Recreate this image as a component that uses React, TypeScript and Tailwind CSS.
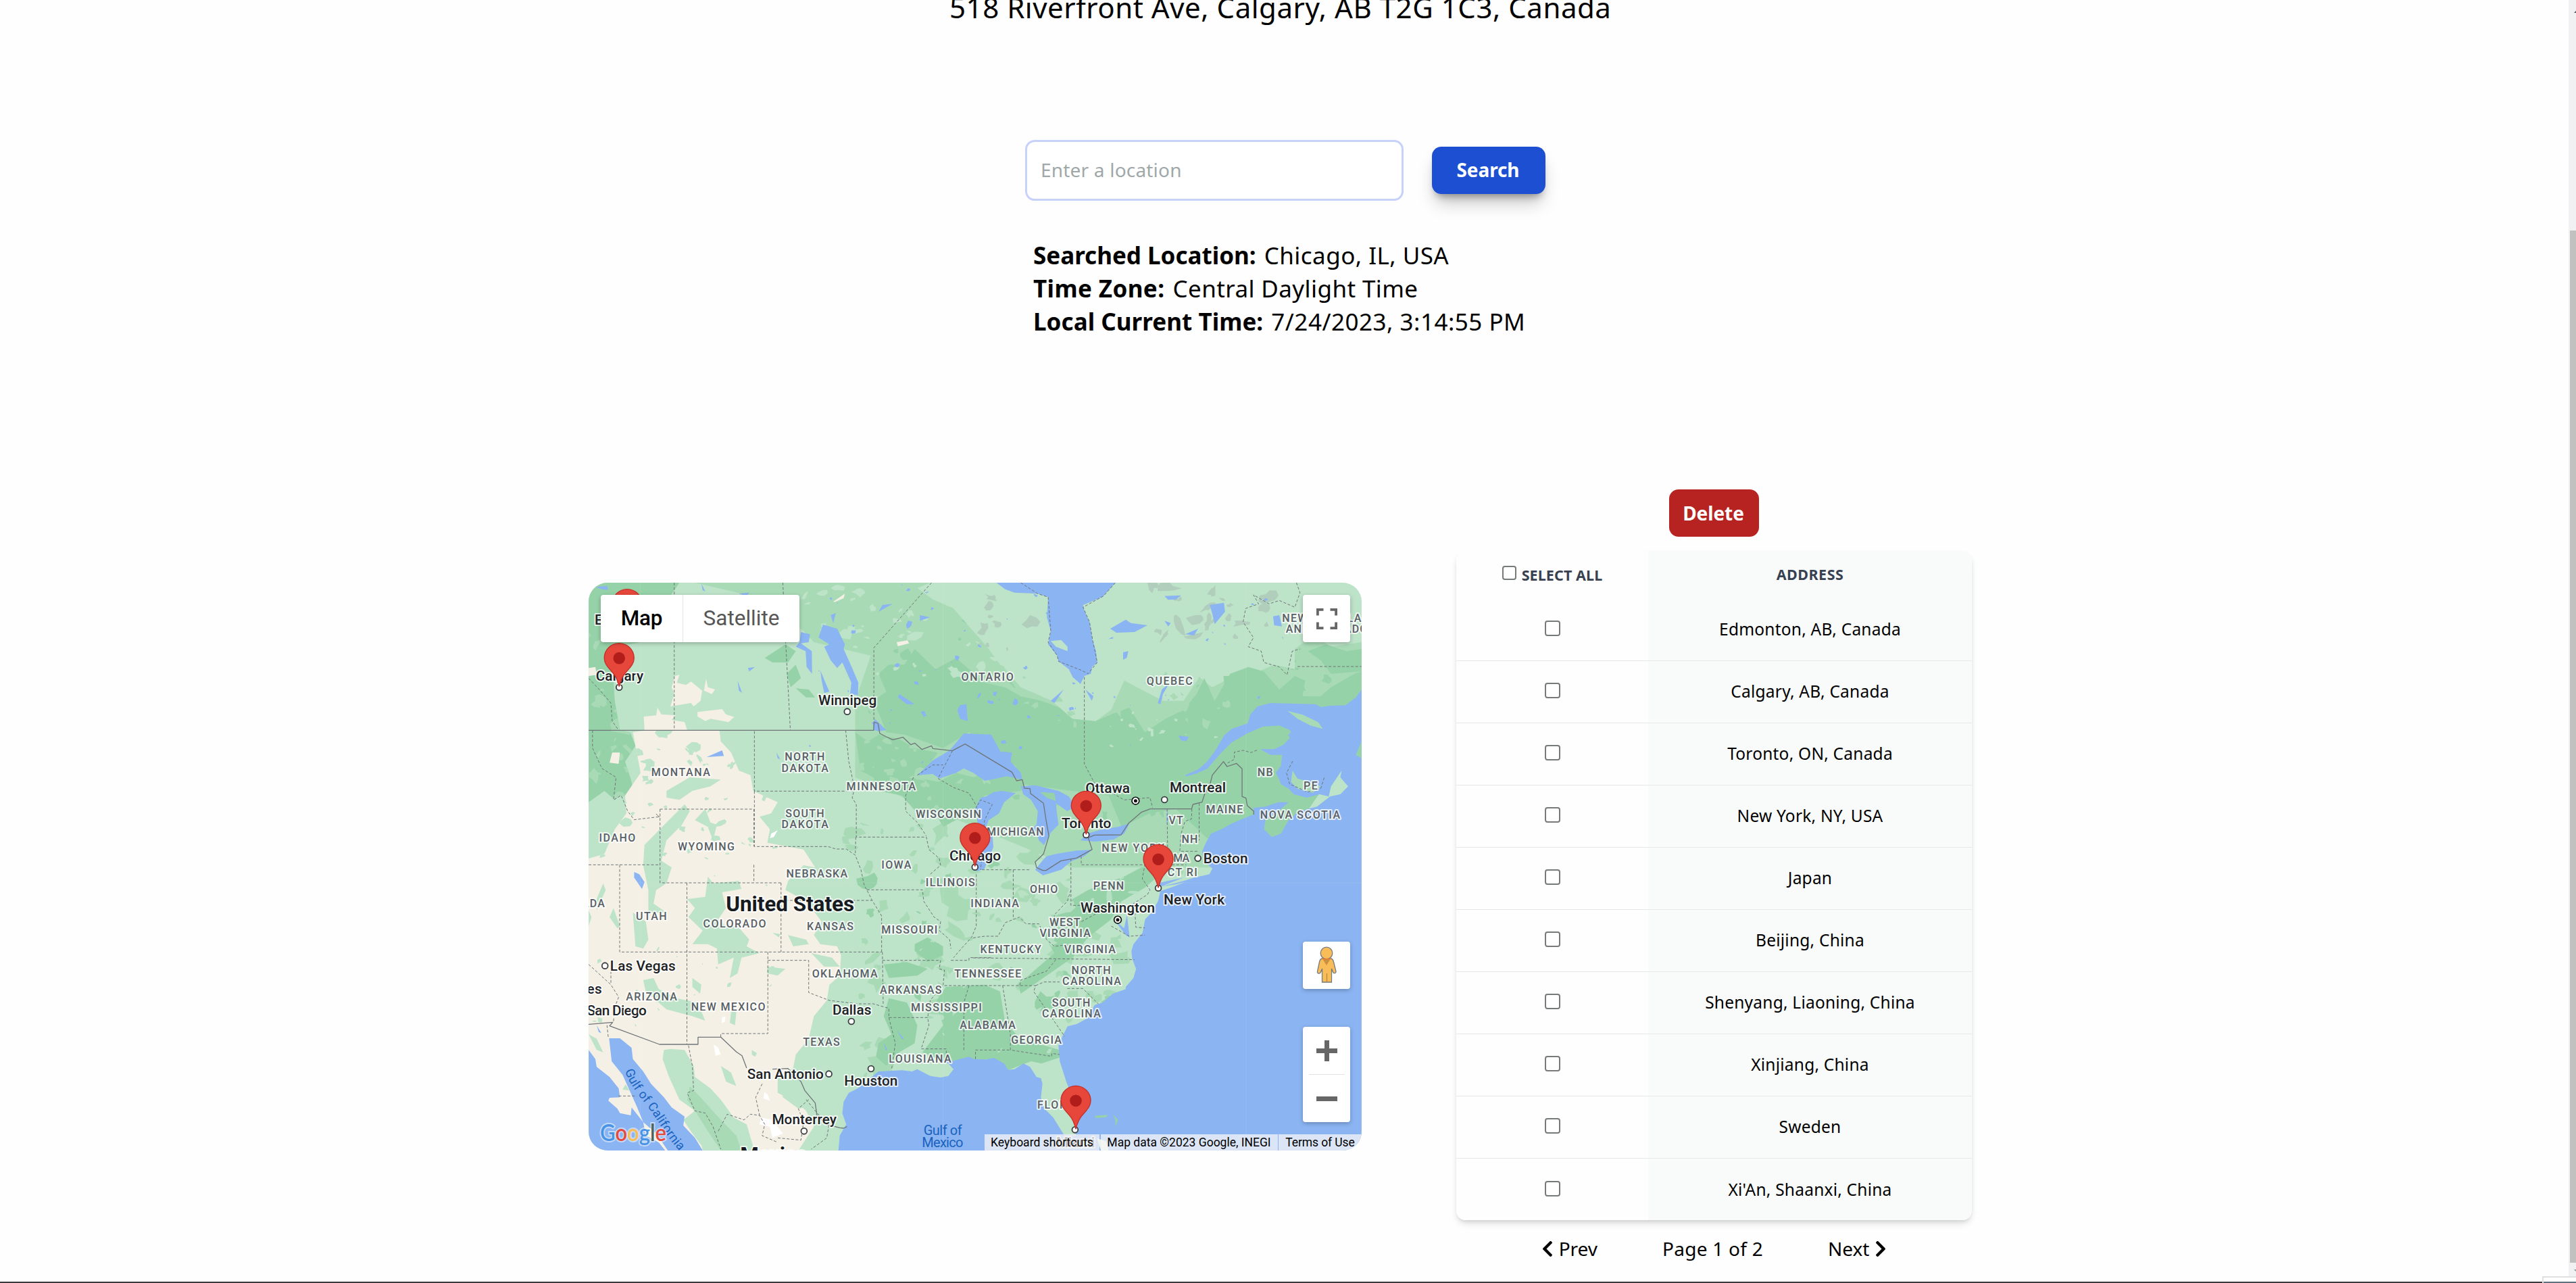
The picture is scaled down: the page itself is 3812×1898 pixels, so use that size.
import { FaChevronLeft, FaChevronRight } from "react-icons/fa";

/* ---------- map geometry ---------- */

const KX = 0.38265;
const KY = 1 / 3;
const px = (x: number) => x * KX - 11;
const py = (y: number) => y * KY - 12;

const LAND = "#bde3c9";
const MID = "#a9dab6";
const FOREST = "#96d2a8";
const SAND = "#f5f0e5";
const TUNDRA = "#b1cebc";
const SEA = "#8ab4f2";

const CANADA_MID =
  "M440,36 L1350,36 1300,60 1360,110 1440,150 1500,230 1570,320 1620,400 1700,440 1780,430 1830,520 1900,600 1980,640 2060,560 2100,470 2150,430 2210,430 2330,400 2440,500 2560,430 2600,440 2680,400 2760,420 2760,330 2830,270 2900,320 3018,300 3018,640 2600,1300 1900,1300 1060,900 1060,560 1120,360 900,300 860,250 800,200 640,90 Z";
const CANADA_FOREST =
  "M1130,560 L1180,520 1150,440 1190,400 1250,400 1290,330 1370,420 1450,370 1500,420 1560,480 1640,500 1700,540 1780,560 1850,590 1900,640 1990,650 2050,620 2120,590 2180,700 2260,640 2330,600 2380,530 2410,460 2450,560 2510,440 2580,410 2640,430 2700,510 2760,450 2800,470 2790,540 2860,540 2900,500 2990,440 3018,430 3018,700 2640,1330 2480,1330 2430,1180 2300,1040 2200,1060 2090,1120 2040,980 1900,960 1700,930 1680,850 1500,700 1400,770 1250,710 1180,700 1160,640 Z";
const NORTH_WOODS =
  "M1060,700 L1110,740 1150,710 1230,730 1290,770 1380,790 1330,870 1300,900 1380,920 1450,880 1520,900 1600,850 1720,920 1700,960 1560,980 1530,1030 1480,1070 1400,1120 1370,1060 1300,1060 1240,980 1150,960 1130,900 1080,870 Z";
const ROCKIES =
  "M29,36 L380,36 330,120 230,110 230,300 130,320 125,460 130,560 150,690 190,700 210,760 170,830 190,900 210,990 150,980 130,1000 90,960 29,1010 Z";
const SAND_ZONE =
  "M200,700 L240,692 535,692 540,740 580,790 610,870 655,890 665,960 760,1010 735,1060 690,1075 730,1130 720,1190 860,1220 905,1300 860,1290 800,1360 790,1400 870,1450 930,1540 900,1600 925,1640 990,1650 1005,1690 1000,1780 960,1820 950,1890 900,1960 880,2060 830,2130 820,2190 760,2230 760,2300 830,2340 870,2380 900,2450 840,2556 540,2556 500,2400 430,2330 330,2200 320,2110 200,2090 29,2120 29,1260 90,1240 130,1130 175,1060 170,980 230,880 215,790 Z";
const EAST_ZONE =
  "M1000,1000 L1400,1000 1600,980 1800,1000 2100,1160 2500,1150 2430,1300 2200,1450 2150,1640 2060,1880 1900,1980 1850,2120 1900,2300 1760,2180 1650,2160 1400,2150 1050,2270 1030,2150 1060,1900 1100,1700 1020,1400 Z";
const APPALACHIA =
  "M1900,1440 L1960,1400 2100,1340 2230,1260 2260,1060 2400,1080 2440,1230 2340,1290 2240,1330 2180,1390 2090,1450 2050,1530 1960,1610 1900,1700 1800,1780 1700,1860 1690,1820 1770,1740 1830,1680 1790,1600 1850,1500 Z M1410,1830 L1560,1820 1620,1850 1640,1990 1700,2060 1850,2110 1860,2140 1780,2170 1740,2160 1650,2200 1590,2150 1400,2160 1320,2120 1400,2000 1370,1900 Z M1190,1880 L1260,1900 1300,2000 1290,2080 1230,2120 1180,2180 1140,2140 1150,2080 1200,2040 1170,1960 Z M1290,1640 L1340,1610 1400,1650 1400,1690 1340,1720 1290,1670 Z M1170,1730 L1260,1720 1340,1750 1300,1780 1190,1790 Z";

const SAND_PATCHES = [
  "M362,450 L380,445 370,480 405,490 425,475 468,515 462,560 435,585 425,570 345,585 360,530 350,500 Z",
  "M483,462 L490,500 518,510 505,530 475,515 Z",
  "M295,590 L310,620 365,625 350,645 400,655 410,690 245,690 242,630 290,625 Z",
  "M450,610 L545,597 560,620 592,632 570,655 500,640 480,650 450,630 Z",
  "M29,415 L55,410 60,445 29,450 Z",
  "M975,120 L1020,85 1015,105 980,122 Z",
  "M1220,300 L1262,292 1268,305 1225,318 Z",
  "M120,790 L150,790 145,840 110,835 Z",
];

const SAND_GREENS = [
  // Colorado ranges
  "M490,1340 L510,1370 610,1360 620,1395 545,1410 560,1480 530,1530 560,1560 605,1560 650,1620 640,1650 690,1680 620,1700 605,1770 575,1790 590,1700 530,1730 525,1660 490,1640 470,1640 430,1640 470,1580 415,1520 440,1480 410,1440 480,1430 Z",
  // Wasatch
  "M245,1200 L330,1100 400,1020 420,1050 390,1110 330,1180 310,1270 350,1300 330,1370 290,1400 280,1460 330,1500 260,1500 260,1400 240,1290 Z",
  "M200,1500 L250,1540 260,1620 240,1660 210,1650 Z",
  "M480,1040 L500,1100 525,1110 510,1180 490,1120 440,1090 Z",
  "M330,960 L420,900 540,910 500,940 430,960 380,1000 330,990 Z",
  "M240,1800 L280,1790 300,1840 370,1880 450,1900 480,1980 430,1960 330,1930 300,1900 250,1850 Z",
  "M430,1790 L465,1820 460,1860 430,1830 Z",
  "M580,1940 L600,1940 595,2000 575,1990 Z",
  "M720,1740 L790,1750 760,1780 720,1770 Z",
  "M29,1070 L60,1060 130,1100 120,1140 60,1180 45,1240 29,1240 Z",
  "M85,1370 L95,1400 60,1490 60,1440 Z",
  "M29,1490 L40,1520 29,1560 Z M125,1480 L150,1560 140,1570 110,1520 Z",
  // Sierra Madre
  "M320,2110 L345,2105 400,2110 435,2180 440,2230 500,2280 540,2330 590,2410 640,2440 670,2556 480,2556 430,2480 395,2420 440,2380 380,2330 340,2230 315,2150 Z",
  "M770,2240 L830,2240 850,2300 890,2360 840,2370 780,2320 Z",
  "M540,2180 L580,2210 600,2270 560,2250 Z M550,2400 L640,2520 620,2530 560,2450 Z",
  "M800,1600 L870,1620 880,1640 820,1650 Z M740,1590 L770,1595 765,1610 Z",
  "M890,1680 L970,1700 1000,1740 940,1740 Z",
  "M660,2110 L680,2125 672,2140 660,2130 Z",
  "M64,1965 L82,1970 80,1990 66,1985 Z M29,2040 L60,2060 85,2120 60,2110 Z",
];

const WHITE_PATCHES = [
  "M735,1150 L760,1135 745,1165 730,1170 Z",
  "M545,1965 L558,1960 555,1985 543,1990 Z",
  "M512,2085 L530,2100 540,2130 520,2135 Z",
  "M708,2295 L722,2310 730,2335 705,2325 Z",
  "M695,2410 L740,2420 780,2480 740,2500 730,2450 690,2440 Z",
];

const WATER = [
  // Atlantic, Gulf of St. Lawrence and Gulf of Mexico
  "M3018,510 L2996,545 2956,580 2896,582 2861,588 2840,575 2666,570 2616,585 2588,620 2578,660 2516,685 2486,715 2456,775 2421,830 2386,865 2336,890 2340,896 2381,882 2421,862 2476,790 2516,745 2576,705 2636,675 2700,670 2740,690 2745,700 2735,712 2741,725 2716,755 2680,775 2626,775 2666,800 2711,800 2706,850 2686,880 2700,910 2706,930 2736,950 2756,975 2806,990 2856,975 2891,985 2900,940 2941,870 2936,900 2966,940 2936,975 2896,985 2846,1030 2776,1050 2736,1090 2706,1150 2671,1165 2641,1130 2646,1090 2686,1060 2736,1010 2696,1010 2646,1030 2601,1035 2600,1065 2566,1080 2516,1105 2476,1130 2436,1150 2416,1190 2401,1230 2410,1270 2441,1305 2430,1330 2370,1345 2330,1360 2240,1385 2300,1375 2335,1365 2290,1385 2240,1405 2231,1450 2206,1500 2181,1530 2171,1590 2136,1640 2128,1670 2131,1705 2146,1750 2136,1790 2106,1830 2106,1840 2056,1860 2016,1900 1986,1910 1956,1970 1916,1995 1881,2005 1861,2050 1846,2090 1851,2160 1876,2250 1906,2340 1926,2410 1911,2490 1866,2485 1826,2410 1791,2370 1778,2320 1784,2260 1778,2235 1761,2230 1736,2185 1711,2170 1676,2195 1651,2198 1636,2170 1596,2145 1568,2152 1520,2150 1500,2140 1440,2158 1380,2150 1420,2170 1440,2195 1420,2225 1390,2232 1350,2225 1300,2195 1280,2205 1240,2200 1150,2205 1070,2280 1035,2300 1015,2340 1010,2390 1025,2440 1000,2490 995,2556 3018,2556 Z",
  // James Bay
  "M1606,36 L1640,65 1676,80 1766,85 1806,100 1801,190 1816,250 1806,310 1841,360 1846,385 1886,420 1901,455 1931,485 1946,450 1971,440 1976,410 1996,390 1991,340 1978,290 1966,210 1946,160 1941,135 2016,100 2066,36 Z",
  // Lake Superior
  "M1300,890 L1360,825 1425,780 1480,705 1586,710 1621,785 1666,790 1661,830 1700,880 1706,910 1646,895 1606,905 1561,915 1516,880 1480,860 1450,880 1385,905 1360,885 Z",
  // Lake Michigan
  "M1525,1035 L1545,990 1566,985 1596,965 1626,960 1680,970 1636,1010 1616,1060 1576,1090 1566,1120 1591,1160 1594,1210 1576,1260 1560,1305 1530,1318 1508,1230 1535,1120 Z",
  // Lake Huron and Georgian Bay
  "M1700,940 L1756,935 1846,960 1886,985 1910,1030 1880,1050 1836,1015 1840,1060 1846,1110 1816,1145 1790,1200 1770,1180 1760,1140 1731,1140 1761,1110 1766,1050 1740,1000 1710,975 Z",
  // Lake Erie
  "M1756,1310 L1780,1275 1800,1250 1836,1240 1916,1225 1976,1222 1946,1250 1896,1272 1856,1310 1786,1335 Z",
  // Lake Ontario
  "M1931,1180 L1956,1150 2016,1130 2076,1120 2121,1105 2100,1150 2060,1175 1990,1185 Z",
  // Lake Winnipeg and neighbours
  "M935,222 L990,240 1020,310 1015,330 1050,420 1072,480 1070,535 1040,530 1045,480 1010,390 990,415 965,380 940,320 960,310 918,280 Z",
  "M850,255 L885,265 880,300 850,305 892,340 893,440 872,410 868,340 830,320 845,300 Z",
  "M925,425 L945,480 960,520 940,525 930,470 Z",
  "M965,180 L985,170 975,215 Z M1310,180 L1350,190 1310,205 Z M1165,135 L1205,130 1150,165 Z",
  "M1465,580 L1490,575 1495,650 1465,640 1455,600 Z",
  "M1230,530 L1290,575 1260,575 1225,545 Z M1135,640 L1180,690 1150,695 1130,690 Z",
  "M55,55 L100,50 105,68 80,65 Z M465,40 L480,75 470,70 Z M610,85 L650,80 640,95 Z",
  "M485,810 L545,780 552,805 Z M645,415 L672,410 650,430 Z M605,470 L622,525 610,515 Z M755,790 L770,820 760,815 Z",
  // Great Salt Lake
  "M205,1320 L225,1330 245,1365 235,1395 205,1345 Z",
  "M2046,240 L2106,200 2126,215 2190,225 2140,255 2070,258 Z M2256,95 L2320,92 2300,110 2270,112 Z",
  "M2431,135 L2486,125 2490,165 2450,220 2440,170 Z M2676,185 L2700,180 2710,230 2680,225 Z M2336,265 L2386,240 2370,270 Z",
  "M2230,570 L2246,510 2276,480 2250,530 2240,575 Z M2310,715 L2350,720 2340,740 2320,735 Z M2256,205 L2280,215 2270,230 Z",
  "M2096,345 L2116,340 2110,370 2096,378 Z M1981,540 L1950,510 1975,560 Z M1816,560 L1866,510 1830,570 Z",
  // Gulf of California and Pacific
  "M108,2058 L150,2058 195,2100 200,2150 240,2205 270,2260 320,2320 350,2365 400,2405 395,2445 440,2500 470,2556 335,2556 290,2480 240,2430 215,2360 160,2220 118,2160 Z",
  "M29,2110 L55,2150 60,2185 110,2230 145,2280 150,2320 110,2322 105,2335 140,2370 150,2390 192,2400 195,2365 240,2430 250,2490 300,2520 325,2556 29,2556 Z",
  "M60,2000 L78,2035 68,2030 Z M1170,2080 L1185,2110 1178,2110 Z M1220,2020 L1248,2060 1240,2060 Z",
  // Chesapeake and Long Island Sound
  "M2111,1510 L2121,1610 2106,1600 2060,1530 2100,1570 Z M2226,1370 L2330,1345 2240,1385 Z M2266,1040 L2272,1080 2264,1110 Z",
];

const ISLANDS: [string, string][] = [
  ["M1816,295 L1856,290 1881,320 1881,340 1836,320 Z", LAND],
  ["M2732,605 L2790,622 2850,655 2868,685 2820,670 2770,640 Z", MID],
  ["M2751,870 L2770,905 2800,915 2860,940 2830,968 2770,950 2745,920 Z", MID],
  ["M3018,740 L2996,800 3018,815 Z", FOREST],
  ["M1986,2402 L2036,2398 2030,2408 1990,2412 Z M2056,2395 L2076,2420 2066,2450 2066,2420 Z", FOREST],
  ["M1995,2502 L2030,2515 2040,2556 2010,2556 Z", "#e9f2e8"],
  ["M1775,965 L1830,970 1836,1005 1800,990 Z", FOREST],
  ["M2484,450 L2530,450 2536,480 2510,500 2486,480 Z", FOREST],
];

const SOLID_BORDERS = [
  "M29,691 H1131 L1133,655 1148,660 1155,705 1180,720 1205,733 1245,722 1275,755 1290,748 1318,776 1355,760 1360,772 1435,782 1485,752 1666,877 1684,915 1706,910 1714,948 1736,950 1738,972 1788,1015 1798,1090 1809,1160 1788,1240 1756,1275 1761,1300 1785,1313 1798,1313 1856,1270 1916,1258 1976,1220 1961,1168 1985,1156 2088,1155 2116,1105 2166,1055 2201,1040 2361,1040 2366,1020 2401,1010 2411,975 2431,935 2441,890 2484,830 2498,852 2534,838 2556,862 2556,985 2571,992 2576,1025 2601,1050 2601,1065",
  "M29,1996 L122,1987 110,2003 303,2085 452,2085 452,2053 540,2053 600,2118 622,2135 640,2190 M740,2195 L800,2192 850,2250 865,2290 905,2345 912,2400 950,2440 1000,2455 1015,2457 1028,2450",
];

const DASHED_BORDERS = [
  "M360,36 V691", "M780,36 L790,280 809,691", "M1355,36 L1132,325 V655",
  "M44,691 V770 L80,860 135,900 125,1000 155,980 180,1050 205,1088 300,1075 290,1062 305,1078",
  "M29,460 L70,510 115,570 120,650 145,691", "M305,1041 H668 V1207 M305,1041 V1368 H773 M29,1288 H305",
  "M670,695 V961 H1058 M670,961 V1207 H955 L985,1218 1025,1218 1060,1245 1082,1310 1095,1380 1105,1400 1125,1445 1162,1515 V1680",
  "M1023,691 L1035,830 1050,910 1055,960 1048,990 1064,1020 V1165 H1335 L1345,1220 1385,1260 1390,1290 1345,1335",
  "M1062,1165 L1060,1245", "M668,1288 V1368", "M149,1288 V1675 H1162", "M409,1368 V2085", "M773,1368 V1675 M773,1446 H1125",
  "M1105,1399 H1320 L1325,1450 1365,1520 1390,1540 1385,1580 1425,1620 1430,1660", "M722,1675 V2037 H540 V2053",
  "M722,1712 H880 V1855 L960,1890 1070,1905 1130,1905 1190,1925 V1966 H1340 L1345,2000 1315,2105 H1412 V2150",
  "M1165,1675 L1168,1905 M1165,1712 H1390 L1385,1750 1405,1755 1400,1820 1350,1890 1340,1965 M1190,1966 L1215,2080 1200,2200",
  "M1405,1824 H1758 L1750,1850 1870,2050 M1430,1712 H1500 V1700 H1590 M1480,2110 V1900 L1500,1824 M1630,1824 L1660,2040 1660,2110 1820,2138 1820,2125 1850,2130",
  "M1525,2150 V2110 H1660", "M1516,1701 L2140,1709 M1836,1709 L1800,1760 1700,1800 1696,1824 M1758,1824 L1790,1808 1850,1808 M1880,1837 L1940,1837 2000,1905",
  "M1528,1330 V1560 L1510,1610 1470,1660 1440,1700", "M1671,1310 V1530 M1516,1612 L1560,1605 1612,1605 1640,1545 1695,1520 1720,1550 1770,1550 1800,1620 1830,1650 1900,1640",
  "M1894,1260 V1468 H1950 M1894,1400 L1880,1450 1830,1510 1830,1550", "M1550,1310 H1740 M1934,1250 V1288 H2180 L2170,1350 2200,1400 2190,1420 2110,1480",
  "M2266,1040 L2268,1230 M2362,1040 L2360,1085 2335,1095 2320,1150 2315,1228 H2390 M2390,1015 V1180 M2250,1288 H2340",
  "M1946,455 V840 L1985,925 2100,1000 2200,990 2210,1035", "M2500,836 L2526,820 2526,788 2560,780 2590,790 2616,778", "M2752,828 L2728,880 2740,930 2810,965 2860,950 2874,900",
  "M1700,36 L1766,85 1806,100 1816,250 1806,300 1841,360 1846,385 1935,425 1960,440 1996,390 1978,290 1966,210 1941,145 2020,95 2066,36",
  "M2766,36 L2780,80 2760,145 2700,115 2660,130 2600,90 2620,130 2570,150 2560,210 2600,280 2580,320 2630,340 2640,390 2700,410 2730,445 2750,340 2780,330 M2770,408 H3018",
  "M1436,782 L1380,905 1440,945 1500,970 1530,1030 M1300,890 L1360,845 1400,845 M1285,900 L1255,980 1255,1050 1300,1100 1335,1160",
  "M1525,1040 L1545,1000 1590,1020 1560,1090 1545,1310", "M29,1730 L115,1820 145,1875 130,1920 125,1985 M115,1760 L115,1820",
  "M145,2314 H215 M415,2090 L430,2180 435,2290 410,2300 440,2380 480,2390 510,2450 540,2550 M530,2470 L565,2395 630,2420 655,2395 690,2400 710,2440 700,2490 760,2520 M700,2260 L675,2320 690,2400",
  "M880,2330 L840,2370 860,2430 850,2510 760,2500 M870,2330 L920,2400 960,2430 950,2500 890,2550 M100,2000 L105,2055",
  "M2050,1560 L2120,1605 2180,1600 M2140,1460 L2145,1565 2180,1568 M1935,1540 L2000,1500 2030,1470",
];

/* ---------- scattered vegetation ---------- */

const seeded = (seed: number) => () => {
  seed = (seed * 1664525 + 1013904223) % 4294967296;
  return seed / 4294967296;
};

function scatter(seed: number, count: number, box: number[], size: number) {
  const rnd = seeded(seed);
  let d = "";
  for (let i = 0; i < count; i++) {
    const cx = box[0] + rnd() * box[2];
    const cy = box[1] + rnd() * box[3];
    const r = size * (0.3 + rnd() * rnd() * 1.4);
    const turn = rnd() * Math.PI;
    const squash = 0.3 + rnd() * 0.7;
    const n = 7 + Math.floor(rnd() * 5);
    for (let k = 0; k < n; k++) {
      const a = (k / n) * Math.PI * 2;
      const rr = r * (0.45 + rnd() * 0.85);
      const u = Math.cos(a) * rr;
      const v = Math.sin(a) * rr * squash;
      const x = cx + u * Math.cos(turn) - v * Math.sin(turn);
      const y = cy + u * Math.sin(turn) + v * Math.cos(turn);
      d += `${k ? "L" : "M"}${x.toFixed(0)},${y.toFixed(0)} `;
    }
    d += "Z ";
  }
  return d;
}

const VEGETATION = {
  canadaForest: scatter(19, 100, [1000, 200, 2018, 900], 26),
  canadaLakes: scatter(41, 75, [840, 36, 1900, 800], 10),
  tundra: scatter(11, 22, [2200, 40, 480, 250], 36),
  tundraWest: scatter(13, 9, [1520, 50, 260, 300], 30),
  rockiesMid: scatter(5, 45, [29, 36, 400, 1000], 34),
  sandGreen: scatter(23, 85, [29, 700, 900, 560], 24),
  sandGreenSouth: scatter(29, 26, [29, 1260, 960, 1260], 14),
  eastMid: scatter(3, 160, [1000, 1000, 1450, 1300], 44),
  eastForest: scatter(31, 30, [1100, 1250, 1300, 950], 34),
  eastLight: scatter(37, 120, [1300, 1000, 1100, 1200], 26),
  northLight: scatter(43, 40, [1060, 700, 640, 400], 22),
};

/* ---------- labels ---------- */

type Label = [text: string, x1: number, x2: number, y: number];

const REGIONS: Label[] = [
  ["ONTARIO", 1470, 1672, 472], ["QUEBEC", 2187, 2364, 490], ["NEWFOUNDLAND", 2711, 3080, 209], ["AND LABRADOR", 2725, 3070, 257],
  ["MONTANA", 271, 499, 895], ["NORTH", 787, 942, 826], ["DAKOTA", 775, 956, 875], ["MINNESOTA", 1026, 1294, 956],
  ["SOUTH", 790, 940, 1076], ["DAKOTA", 775, 956, 1125], ["WISCONSIN", 1294, 1547, 1081], ["IDAHO", 69, 210, 1185],
  ["WYOMING", 374, 593, 1224], ["IOWA", 1161, 1276, 1304], ["NEBRASKA", 793, 1030, 1344], ["MICHIGAN", 1568, 1789, 1159],
  ["VT", 2272, 2328, 1108], ["NH", 2322, 2384, 1192], ["MAINE", 2416, 2559, 1059], ["NB", 2615, 2675, 895],
  ["PE", 2794, 2848, 955], ["NOVA SCOTIA", 2626, 2935, 1082], ["NEW YORK", 2013, 2256, 1231], ["MA", 2290, 2352, 1275],
  ["CT RI", 2268, 2383, 1339], ["PENN", 1980, 2099, 1397], ["OHIO", 1735, 1843, 1414], ["ILLINOIS", 1332, 1523, 1384],
  ["INDIANA", 1506, 1693, 1475], ["WEST", 1811, 1930, 1559], ["VIRGINIA", 1773, 1970, 1608], ["KENTUCKY", 1543, 1779, 1681],
  ["VIRGINIA", 1868, 2067, 1681], ["TENNESSEE", 1443, 1702, 1788], ["NORTH", 1896, 2048, 1772], ["CAROLINA", 1861, 2088, 1820],
  ["SOUTH", 1821, 1969, 1916], ["CAROLINA", 1782, 2009, 1964], ["ALABAMA", 1464, 1680, 2016], ["GEORGIA", 1663, 1858, 2081],
  ["FLORIDA", 1764, 1956, 2370], ["MISSISSIPPI", 1275, 1549, 1938], ["LOUISIANA", 1190, 1431, 2166], ["ARKANSAS", 1155, 1394, 1861],
  ["MISSOURI", 1161, 1378, 1594], ["KANSAS", 873, 1053, 1579], ["COLORADO", 472, 715, 1565], ["UTAH", 212, 331, 1534],
  ["NEVADA", -86, 91, 1477], ["ARIZONA", 173, 371, 1889], ["NEW MEXICO", 425, 712, 1934], ["OKLAHOMA", 893, 1146, 1788],
  ["TEXAS", 858, 1000, 2090],
];

const CITIES: Label[] = [
  ["Edmonton", 52, 310, 223], ["Calgary", 57, 241, 470], ["Winnipeg", 917, 1143, 578], ["Chicago", 1424, 1623, 1268],
  ["Ottawa", 1950, 2122, 970], ["Montreal", 2276, 2493, 967], ["Toronto", 1858, 2050, 1124], ["Boston", 2406, 2578, 1281],
  ["New York", 2253, 2488, 1465], ["Washington", 1931, 2219, 1500], ["Las Vegas", 112, 365, 1758], ["Los Angeles", -224, 80, 1861],
  ["San Diego", 22, 253, 1955], ["Dallas", 972, 1122, 1952], ["Houston", 1017, 1224, 2268], ["San Antonio", 642, 938, 2238],
  ["Monterrey", 738, 988, 2439], ["Miami", 1837, 1986, 2540],
];

const COUNTRIES: Label[] = [["United States", 560, 1056, 1495], ["Mexico", 615, 875, 2608]];

const DOTS = [
  [147, 500], [1029, 608], [1523, 1298], [1953, 1155], [2256, 999], [2385, 1259], [2232, 1391], [92, 1736],
  [1045, 1983], [958, 2216], [1121, 2193], [862, 2470], [1910, 2464],
];
const CAPITALS = [[2144, 1004], [2075, 1532]];
const PINS = [[178, 257], [147, 497], [1953, 1153], [1523, 1295], [2232, 1390], [1913, 2461]];

function Labels({ items, size, weight, fill }: { items: Label[]; size: number; weight: number; fill: string }) {
  return (
    <g fontFamily="Roboto, sans-serif" fontSize={size} fontWeight={weight} fill={fill} stroke="#ffffff" strokeOpacity={0.75} strokeWidth={4} strokeLinejoin="round" paintOrder="stroke">
      {items.map(([text, x1, x2, y], i) => (
        <text key={i} x={px(x1)} y={py(y)} textLength={(x2 - x1) * KX} lengthAdjust="spacing">
          {text}
        </text>
      ))}
    </g>
  );
}

function Pin({ x, y }: { x: number; y: number }) {
  return (
    <g transform={`translate(${px(x)} ${py(y)})`}>
      <path
        d="M0,0 C-1.5,-6 -3,-11 -6.5,-16.5 C-12,-25 -22,-31 -22,-42 A22,22 0 0 1 22,-42 C22,-31 12,-25 6.5,-16.5 C3,-11 1.5,-6 0,0 Z"
        fill="#e7473b"
        stroke="#c5312a"
        strokeWidth={1.4}
      />
      <circle cx={0} cy={-42} r={8.8} fill="#b11d1b" />
    </g>
  );
}

function MapCanvas() {
  return (
    <svg className="block h-full w-full" viewBox="0 0 1144 840">
      <defs>
        <clipPath id="canada"><path d={CANADA_MID} /></clipPath>
        <clipPath id="rockies"><path d={ROCKIES} /></clipPath>
        <clipPath id="sand"><path d={SAND_ZONE} /></clipPath>
        <clipPath id="east"><path d={EAST_ZONE} /></clipPath>
        <clipPath id="woods"><path d={NORTH_WOODS} /></clipPath>
        <path id="gulf" d="M54,722 C59,740 74,758 88,776 S114,818 134,840 L144,852" />
      </defs>
      <g transform={`translate(-11 -12) scale(${KX} ${KY})`}>
        <rect x={0} y={0} width={3060} height={2600} fill={LAND} />
        <path d={VEGETATION.eastMid} fill={MID} clipPath="url(#east)" />
        <path d={APPALACHIA} fill={FOREST} />
        <g clipPath="url(#east)">
          <path d={VEGETATION.eastForest} fill={FOREST} />
          <path d={VEGETATION.eastLight} fill={LAND} opacity={0.8} />
        </g>
        <path d={CANADA_MID} fill={MID} />
        <path d={CANADA_FOREST} fill={FOREST} />
        <g clipPath="url(#canada)">
          <path d={VEGETATION.canadaForest} fill={FOREST} />
        </g>
        <path d="M1640,420 L1700,500 1820,560 1900,640 1990,650 2050,600 2100,470 2250,560 2330,560 2400,440 2400,200 1600,300 Z" fill={LAND} />
        <g clipPath="url(#canada)">
          <path d={scatter(77, 60, [440, 36, 1200, 420], 26)} fill={LAND} />
          <path d={scatter(78, 35, [1620, 440, 900, 240], 24)} fill={MID} />
          <path d={scatter(79, 16, [2000, 600, 500, 160], 14)} fill={LAND} />
        </g>
        <path d={VEGETATION.tundra} fill={TUNDRA} />
        <path d={VEGETATION.tundraWest} fill={TUNDRA} />
        <path d="M2810,340 L2880,310 2960,340 3018,330 3018,430 2900,440 2860,380 Z M710,370 L790,310 830,340 800,390 740,390 Z M830,505 L880,510 905,545 870,545 Z M795,440 L830,400 850,460 810,500 Z" fill={FOREST} />
        <path d={ROCKIES} fill={FOREST} />
        <path d={VEGETATION.rockiesMid} fill={MID} clipPath="url(#rockies)" />
        <path d={NORTH_WOODS} fill={FOREST} />
        <path d={VEGETATION.northLight} fill={MID} clipPath="url(#woods)" />
        <path d={SAND_ZONE} fill={SAND} />
        <g clipPath="url(#sand)">
          <path d={VEGETATION.sandGreen} fill={LAND} />
          <path d={VEGETATION.sandGreenSouth} fill={LAND} />
        </g>
        <path d="M29,2050 L108,2050 215,2080 320,2100 420,2300 470,2556 29,2556 Z" fill={SAND} />
        {SAND_GREENS.map((d, i) => <path key={i} d={d} fill={LAND} />)}
        <path d="M420,2270 L470,2330 540,2420 600,2490 620,2556 540,2556 490,2470 440,2380 410,2330 Z" fill={MID} />
        <path d="M160,2285 L172,2262 186,2290 Z M225,2370 L250,2380 268,2420 240,2415 Z" fill={LAND} />
        {SAND_PATCHES.map((d, i) => <path key={i} d={d} fill={SAND} />)}
        {WHITE_PATCHES.map((d, i) => <path key={i} d={d} fill="#ffffff" />)}
        <path d={VEGETATION.canadaLakes} fill={SEA} />
        {WATER.map((d, i) => <path key={i} d={d} fill={SEA} />)}
        {ISLANDS.map(([d, fill], i) => <path key={i} d={d} fill={fill} />)}
        <path d="M229,36 V2556 M1400,36 V2556 M2571,36 V2556 M29,1368 H3018" stroke="#ffffff" strokeOpacity={0.15} strokeWidth={2} fill="none" />
        <g fill="none" stroke="#6f7579" strokeLinejoin="round">
          {SOLID_BORDERS.map((d, i) => <path key={i} d={d} strokeWidth={1.3} vectorEffect="non-scaling-stroke" />)}
          {DASHED_BORDERS.map((d, i) => <path key={i} d={d} strokeWidth={1} strokeDasharray="4 2.6" vectorEffect="non-scaling-stroke" />)}
        </g>
      </g>
      <Labels items={REGIONS} size={16} weight={500} fill="#595f65" />
      <g fill="#ffffff" stroke="#3c4043" strokeWidth={1.8}>
        {DOTS.map(([x, y], i) => <circle key={i} cx={px(x)} cy={py(y)} r={4.4} />)}
      </g>
      {CAPITALS.map(([x, y], i) => (
        <g key={i}>
          <circle cx={px(x)} cy={py(y)} r={5.4} fill="#ffffff" stroke="#111111" strokeWidth={1.7} />
          <circle cx={px(x)} cy={py(y)} r={2.5} fill="#111111" />
        </g>
      ))}
      <Labels items={CITIES} size={20.8} weight={500} fill="#202124" />
      <Labels items={COUNTRIES} size={31.5} weight={700} fill="#171a20" />
      <g fontFamily="Roboto, sans-serif" fontSize={20} fill="#1a63bd">
        <text x={px(1324)} y={py(2486)} textLength={57}>Gulf of</text>
        <text x={px(1318)} y={py(2542)} textLength={61}>Mexico</text>
        <text fontSize={18.5}><textPath href="#gulf" textLength={144}>Gulf of California</textPath></text>
      </g>
      {PINS.map(([x, y], i) => <Pin key={i} x={x} y={y} />)}
      <text x={17} y={826} fontFamily="Lato, sans-serif" fontSize={35} fontWeight={600} textLength={98} lengthAdjust="spacingAndGlyphs" stroke="#ffffff" strokeOpacity={0.5} strokeWidth={4} paintOrder="stroke">
        <tspan fill="#4a94e6">G</tspan><tspan fill="#e64a3c">o</tspan><tspan fill="#f8bd54">o</tspan><tspan fill="#4a94e6">g</tspan><tspan fill="#4d6357">l</tspan><tspan fill="#e64a3c">e</tspan>
      </text>
    </svg>
  );
}

function Pegman() {
  return (
    <svg className="h-[60px] w-[30px]" viewBox="0 0 30 60">
      <path d="M8.5,20 H21.5 Q24.5,20.5 25.5,25 L29,39 Q29,42 26.5,41.5 L25,41 22.5,35 V55 H8.5 V35 L6,41 4,42 Q1,42 1.5,39 L4.5,25 Q5.5,20.5 8.5,20 Z" fill="#f8bd58" stroke="#757a7e" strokeWidth={1.3} />
      <path d="M15.5,42 V55" stroke="#b8863b" strokeWidth={1.2} />
      <circle cx={15} cy={12} r={8.8} fill="#f8bd58" stroke="#757a7e" strokeWidth={1.3} />
      <path d="M9,20.5 H21 L15,30 Z" fill="#cb8f40" />
      <path d="M8,20.5 H22" stroke="#ec7a35" strokeWidth={1.4} />
    </svg>
  );
}

const CONTROL = "flex w-[70px] items-center justify-center rounded-[4px] bg-white shadow-[0_2px_6px_rgba(0,0,0,0.25)]";

function MapCard() {
  return (
    <div className="relative mt-[138px] h-[840px] w-[1144px] overflow-hidden rounded-[28px]">
      <MapCanvas />
      <div className="absolute top-[18px] left-[18px] flex h-[70px] w-[294px] rounded-[4px] bg-white font-['Roboto',sans-serif] text-[31.5px] shadow-[0_2px_6px_rgba(0,0,0,0.25)]">
        <button className="w-[122px] border-r border-[#e4e4e4] font-medium tracking-[-0.2px] text-black">Map</button>
        <button className="flex-1 text-[#565656]">Satellite</button>
      </div>
      <div className={`${CONTROL} absolute top-[18px] right-[17px] h-[70px]`}>
        <svg className="h-[31px] w-[31px]" viewBox="0 0 31 31" fill="none" stroke="#666666" strokeWidth={3.8}>
          <path d="M1.9,10.5 V1.9 H10.5 M20.5,1.9 H29.1 V10.5 M29.1,20.5 V29.1 H20.5 M10.5,29.1 H1.9 V20.5" />
        </svg>
      </div>
      <div className={`${CONTROL} absolute right-[17px] bottom-[239px] h-[70px]`}>
        <Pegman />
      </div>
      <div className={`${CONTROL} absolute right-[17px] bottom-[42px] h-[141px] flex-col`}>
        <button className="flex flex-1 items-center">
          <svg className="h-[31px] w-[31px]" viewBox="0 0 31 31" fill="#666666"><path d="M12,0 H19 V12 H31 V19 H19 V31 H12 V19 H0 V12 H12 Z" /></svg>
        </button>
        <div className="h-px w-[53px] bg-[#e2e2e2]" />
        <button className="flex flex-1 items-center">
          <svg className="h-[31px] w-[31px]" viewBox="0 0 31 31" fill="#666666"><path d="M0,12 H31 V19 H0 Z" /></svg>
        </button>
      </div>
      <div className="absolute right-0 bottom-0 flex h-6 gap-[1.5px] font-['Roboto',sans-serif] text-[17.5px] leading-6 whitespace-nowrap text-black">
        <span className="w-[170px] bg-[#f5f5f5]/75 text-center">Keyboard shortcuts</span>
        <span className="w-[262px] bg-[#f5f5f5]/75 text-center">Map data ©2023 Google, INEGI</span>
        <span className="w-[123px] bg-[#f5f5f5]/75 text-center tracking-[-0.1px]">Terms of Use</span>
      </div>
    </div>
  );
}

/* ---------- location table ---------- */

const ADDRESSES = [
  "Edmonton, AB, Canada", "Calgary, AB, Canada", "Toronto, ON, Canada", "New York, NY, USA", "Japan",
  "Beijing, China", "Shenyang, Liaoning, China", "Xinjiang, China", "Sweden", "Xi'An, Shaanxi, China",
];

function LocationTable() {
  return (
    <div className="h-[990px] w-[763px] overflow-hidden rounded-[14px]">
      <div className="flex h-[71px] text-[21.5px] font-bold text-[#374151]">
        <div className="flex w-[284px] items-center justify-center gap-[8px] bg-[#fefefe]">
          <input type="checkbox" className="-mt-[6px] h-[21px] w-[21px] appearance-none rounded-[4px] border-2 border-[#767b7a] bg-white" />
          <span className="mt-px tracking-[0.1px]">SELECT ALL</span>
        </div>
        <div className="flex flex-1 items-center justify-center bg-[#f9fafa] tracking-[0.5px]">ADDRESS</div>
      </div>
      {ADDRESSES.map((address) => (
        <div key={address} className="flex h-[92px] border-b-[1.5px] border-[#e5e7e8] last:border-b-0">
          <div className="flex w-[284px] items-center justify-center bg-[#fefefe]">
            <input type="checkbox" className="-mt-[4px] h-[23px] w-[23px] appearance-none rounded-[4px] border-2 border-[#767b7a] bg-white" />
          </div>
          <div className="flex flex-1 items-center justify-center bg-[#f9fafa] text-[24.5px] tracking-[0.22px] text-black">{address}</div>
        </div>
      ))}
    </div>
  );
}

export default function App() {
  return (
    <div className="relative flex h-[1898px] w-full overflow-hidden bg-[#fefefe] font-['Noto_Sans','Open_Sans',sans-serif] text-black">
      <main className="min-w-0 flex-1">
        <p className="-mt-[17px] ml-[1405px] text-[42px] leading-[56px] tracking-[0.54px] whitespace-nowrap">
          518 Riverfront Ave, Calgary, AB T2G 1C3, Canada
        </p>

        <form className="mt-[168px] ml-[1517px] flex items-center gap-[42px]">
          <input
            type="text"
            placeholder="Enter a location"
            className="h-[90px] w-[560px] rounded-[14px] border-[3px] border-[#c7d2fb] bg-white px-[20px] pb-[2px] text-[28px] tracking-[0.2px] placeholder:text-[#9fa8a9]"
          />
          <button type="button" className="h-[70px] w-[168px] rounded-[14px] bg-[#1d4fd3] pr-[2px] pb-[2px] text-[28px] font-bold tracking-[-0.1px] text-white shadow-[0_18px_26px_-5px_rgba(0,0,0,0.22),0_9px_12px_-6px_rgba(0,0,0,0.35)]">
            Search
          </button>
        </form>

        <div className="mt-[56px] ml-[1529px] text-[35px] leading-[49px] whitespace-nowrap">
          <p><b>Searched Location:</b> <span className="ml-[3px] tracking-[0.45px]">Chicago, IL, USA</span></p>
          <p><b className="tracking-[0.4px]">Time Zone:</b> <span className="ml-[3px] tracking-[0.4px]">Central Daylight Time</span></p>
          <p><b className="tracking-[0.05px]">Local Current Time:</b> <span className="ml-[3px] tracking-[0.5px]">7/24/2023, 3:14:55 PM</span></p>
        </div>

        <section className="mt-[224px] ml-[871px] flex items-start gap-[140px]">
          <MapCard />
          <div className="flex flex-col items-center">
            <button className="mb-[21px] h-[70px] w-[133px] rounded-[14px] bg-[#b72320] pr-[2px] text-[28px] font-bold tracking-[-0.1px] text-white">Delete</button>
            <div className="rounded-[14px] shadow-[0_7px_11px_-2px_rgba(0,0,0,0.12),0_3px_7px_-3px_rgba(0,0,0,0.15)]">
              <LocationTable />
            </div>
            <div className="mt-[22px] flex h-10 items-center text-[28px] leading-10 whitespace-nowrap">
              <button className="flex items-center gap-[7px]">
                <FaChevronLeft className="h-[27px] w-[20px]" />
                Prev
              </button>
              <span className="mx-[96px] tracking-[0.25px]">Page 1 of 2</span>
              <button className="flex items-center gap-[7px]">
                Next
                <FaChevronRight className="h-[27px] w-[20px]" />
              </button>
            </div>
          </div>
        </section>
      </main>

      <div className="flex w-[11px] flex-col justify-between overflow-hidden bg-[#f1f1f3]">
        <svg className="mt-4 ml-2 h-[3px] w-[3px]" viewBox="0 0 3 3"><path d="M0,3 L3,0 V3 Z" fill="#505357" /></svg>
        <div className="mt-[322px] ml-[2px] flex-1 bg-[#c1c1bf]" />
        <svg className="mt-[10px] mb-[17px] ml-2 h-[3px] w-[3px]" viewBox="0 0 3 3"><path d="M0,0 H3 V3 Z" fill="#8a9896" /></svg>
      </div>

      <div className="absolute right-0 bottom-0 h-[2px] w-full bg-[#3a393b]" />
      <div className="absolute right-0 bottom-0 h-[10px] w-[50px] border-t-2 border-l-2 border-[#dfe1e0] bg-[#fefefe]">
        <div className="mt-[6px] h-[2px] bg-[#5f717c]" />
      </div>
    </div>
  );
}
